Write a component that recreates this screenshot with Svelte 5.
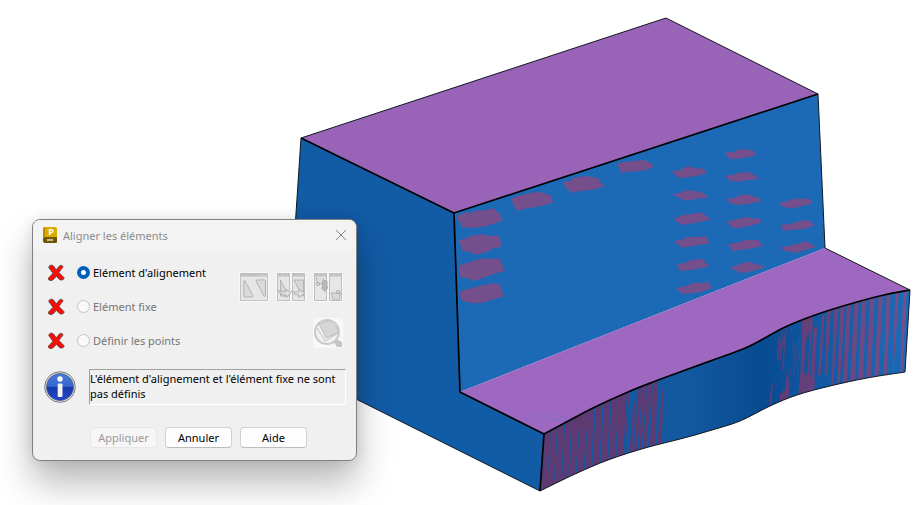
<script lang="ts">
  type Point = [number, number]

  let selected = $state('align')

  const steps = [
    { id: 'align', label: "Elément d'alignement", enabled: true },
    { id: 'fixed', label: 'Elément fixe', enabled: false },
    { id: 'points', label: 'Définir les points', enabled: false },
  ]

  const topCurve: Point[] = [
    [544, 434], [572, 419], [595, 407], [628, 392], [653, 382], [680, 372], [713, 360], [743, 349],
    [763, 339], [783, 328], [807, 318], [830, 310], [857, 302], [884, 295], [910, 290],
  ]
  const bottomCurve: Point[] = [
    [540, 491], [575, 474], [608, 460], [645, 448], [684, 438], [712, 430], [740, 421],
    [770, 406], [797, 395], [830, 386], [867, 378], [905, 372],
  ]

  // Catmull-Rom spline written as cubic segments, without the leading move
  function smooth(points: Point[]): string {
    let d = ''
    for (let i = 0; i < points.length - 1; i++) {
      const p0 = points[i - 1] ?? points[i]
      const p1 = points[i]
      const p2 = points[i + 1]
      const p3 = points[i + 2] ?? p2
      d += ` C ${p1[0] + (p2[0] - p0[0]) / 6} ${p1[1] + (p2[1] - p0[1]) / 6}`
      d += ` ${p2[0] - (p3[0] - p1[0]) / 6} ${p2[1] - (p3[1] - p1[1]) / 6} ${p2[0]} ${p2[1]}`
    }
    return d
  }

  const topEdge = `M 544 434${smooth(topCurve)}`
  const bottomEdge = `M 540 491${smooth(bottomCurve)}`
  const curvedFace = `${topEdge} L 905 372${smooth([...bottomCurve].reverse())} Z`
  const stepFace = `${topEdge} L 825 248 L 460 392 Z`

  // overlap patches on the upright face, in thirds of a scene unit
  const leftPatches = [
    '52,258 78,247 92,249 110,241 128,242 162,234 168,244 180,252 187,272 160,281 140,288 95,294 64,291 64,278 55,275',
    '55,330 74,328 88,319 125,312 142,317 176,317 187,349 156,357 142,365 107,374 90,366 68,362 62,347',
    '55,407 74,401 88,397 120,386 168,386 180,386 194,424 160,432 132,443 100,453 88,446 60,440 59,420',
    '60,485 76,479 110,470 148,461 172,460 182,470 191,499 152,511 124,519 95,520 68,512 61,502',
    '214,206 232,198 265,190 298,185 322,193 333,199 339,218 300,229 262,235 230,242 221,228',
    '368,155 392,152 400,143 440,138 474,145 480,155 494,169 455,180 420,183 398,188 380,176',
    '530,103 546,97 580,93 610,90 632,98 642,112 600,124 560,125 543,131 542,119',
  ]
  const rightPatches = [
    '215,124 240,121 255,111 275,110 288,116 308,115 321,129 285,139 250,143 235,144',
    '217,192 240,189 258,181 285,183 308,189 318,196 326,203 290,206 260,212 238,204',
    '221,266 250,255 275,252 302,247 318,257 332,269 295,277 265,282 248,284 232,276',
    '221,335 250,328 262,321 290,322 318,318 329,340 295,345 268,350 246,353 238,346',
    '229,404 260,397 275,389 312,387 315,398 329,408 290,418 262,421 240,423',
    '227,475 262,467 280,458 300,460 325,457 336,475 300,487 262,491 248,492 240,485',
    '372,68 402,66 418,58 440,59 457,60 470,75 445,81 410,87 388,86',
    '374,137 400,134 425,127 452,128 470,140 478,146 440,151 415,155 390,152',
    '379,207 402,204 420,196 445,193 458,199 477,203 484,212 450,221 415,225 392,220',
    '379,275 410,268 440,261 455,265 480,266 486,277 450,287 418,294 402,295 390,287',
    '381,343 410,338 438,330 475,329 480,339 491,347 450,356 415,361 395,363 392,353',
    '388,412 408,407 428,398 450,395 466,403 482,405 493,412 478,418 455,424 420,430 405,419',
    '538,218 560,214 575,208 605,206 628,206 639,219 610,227 580,234 550,232',
    '541,285 575,281 600,272 625,270 636,280 645,286 610,297 575,300 550,302',
    '543,352 575,346 600,339 622,334 634,343 648,350 618,359 590,368 560,364 548,358',
  ]

  // [x top, y top, width top, x bottom, y bottom, width bottom]
  const slivers = [
    [91, 250, 2, 82, 395, 2], [113, 228, 4, 103, 390, 2], [134, 215, 3, 125, 385, 3],
    [156, 200, 2, 147, 378, 4], [179, 212, 1, 169, 366, 5], [204, 200, 1, 192, 358, 6],
    [226, 165, 5, 215, 350, 5], [250, 155, 5, 239, 343, 5], [274, 145, 5, 263, 333, 4],
    [293, 195, 1, 287, 325, 5], [322, 125, 3, 311, 318, 4],
  ]
  const stripes = [
    [343, 155, 6, 334, 312, 11], [361, 110, 12, 347, 308, 9], [375, 100, 13, 360, 303, 7],
    [390, 98, 15, 374, 298, 9], [406, 90, 13, 398, 290, 18], [429, 118, 3, 418, 288, 14],
  ]
  const rightStripes = [
    [406, 170, 11, 396, 345, 12], [430, 135, 7, 418, 316, 8], [447, 118, 12, 438, 312, 5],
    [469, 112, 13, 457, 350, 4], [488, 106, 13, 475, 348, 8], [507, 102, 12, 494, 345, 13],
    [530, 94, 13, 517, 340, 14], [553, 88, 14, 541, 335, 14], [577, 80, 14, 565, 330, 14],
    [602, 75, 13, 589, 328, 12], [626, 70, 12, 615, 325, 9], [651, 65, 11, 640, 300, 2],
    [675, 58, 10, 664, 312, 6],
  ]

  function strip([xt, yt, wt, xb, yb, wb]: number[]): string {
    return `${xt - wt / 2},${yt} ${xt + wt / 2},${yt} ${xb + wb / 2},${yb} ${xb - wb / 2},${yb}`
  }
</script>

{#snippet cross()}
  <svg class="cross" viewBox="0 0 18 18" aria-hidden="true">
    <path
      d="M2.2 2.2 C3.8 .6 6 .8 7.2 2.9 L9.2 6 L12.2 2.2 C13.4 1 15.6 1.2 15.9 2.6 C16 3.6 14.8 4.6 13.9 5.6 L11.9 8.5 L16.9 13.6 C17.6 15 15.6 16.4 13.2 15.9 L9.3 12.2 L6.8 15 C5.6 16.6 3.3 17 1.7 15.7 C.8 14.4 2.1 13.3 3.3 12.3 L6 9.3 L3.4 5.6 C2.8 4.6 1.1 3.8 2.2 2.2 Z"
      fill="#ff0a06"
      stroke="#5a3a38"
      stroke-width=".9"
    />
  </svg>
{/snippet}

<main class="workspace">
  <svg class="scene" viewBox="0 0 922 505" role="img" aria-label="Vue 3D du solide">
    <defs>
      <linearGradient id="shade" gradientUnits="userSpaceOnUse" x1="540" y1="0" x2="909" y2="0">
        <stop offset="0" stop-color="#145ba4" />
        <stop offset=".4" stop-color="#13599f" />
        <stop offset=".6" stop-color="#074b91" />
        <stop offset=".72" stop-color="#0f569f" />
        <stop offset="1" stop-color="#1c6bb7" />
      </linearGradient>
      <linearGradient id="violet" gradientUnits="userSpaceOnUse" x1="290" y1="0" x2="690" y2="0">
        <stop offset="0" stop-color="#5f3b75" />
        <stop offset="1" stop-color="#77508c" />
      </linearGradient>
      <clipPath id="curved"><path d={curvedFace} /></clipPath>
    </defs>

    <polygon points="301,138 454,213 460,392 544,434 540,491 286,364" fill="#125ba5" />
    <polygon points="454,213 818,94 825,248 460,392" fill="#1c69b5" />
    <polygon points="301,138 666,18 818,94 454,213" fill="#9963b8" />
    <path d={stepFace} fill="#9f68c0" />
    <path d={curvedFace} fill="url(#shade)" />

    <g transform="translate(440 130) scale(.3333)" fill="#754f8c">
      {#each leftPatches as points}
        <polygon {points} />
      {/each}
    </g>
    <g transform="translate(600 130) scale(.3333)" fill="#754f8c">
      {#each rightPatches as points}
        <polygon {points} />
      {/each}
    </g>

    <g clip-path="url(#curved)">
      <g transform="translate(520 350) scale(.3333)" fill="#5d3a72">
        <polygon points="60,260 72,240 329,115 315,325 60,430" />
        {#each slivers as s}
          <polygon points={strip(s)} fill="#135aa2" />
        {/each}
        {#each stripes as s}
          <polygon points={strip(s)} />
        {/each}
      </g>
      <g transform="translate(680 270) scale(.3333)" fill="url(#violet)">
        <path d="M298 200 L293 275 M307 185 L300 270 M318 172 L308 300 M314 195 L304 240" fill="none" stroke="#53407d" stroke-width="5" />
        <polygon points="267,410 272,360 282,324 277,364 273,408" />
        <polygon points="298,400 301,365 305,378 311,350 314,365 321,294 325,330 329,345 325,390" />
        <path d="M338 205 L341 260 M346 220 L341 320 M354 207 L350 245 L353 320 M359 207 L357 270 M333 290 L328 345 M335 175 V190" fill="none" stroke="#4b4b8b" stroke-width="2" />
        <polygon points="354,385 362,300 366,145 399,130 397,185 391,225 388,310 397,325 405,330 402,370" />
        <polygon points="384,185 389,200 383,300 376,322 372,300 378,220" fill="#0f569f" />
        {#each rightStripes as s}
          <polygon points={strip(s)} />
        {/each}
      </g>
    </g>

    <path d="M525 418 l20 3 M530 414 l34 8 M545 413 l22 4 M551 419 l18 1 M522 419 l12 5" stroke="#7772c4" stroke-width=".7" />

    <g class="thin">
      <path d="M301 138 L286 364 L540 491 M301 138 L666 18 L818 94 L825 248 L910 290 L905 372" />
      <path d={bottomEdge} />
    </g>
    <g class="edge">
      <path d="M301 138 L454 213 L818 94 M454 213 L460 392 L544 434 L540 491" />
      <path d={topEdge} />
    </g>
  </svg>

  <section class="dialog" role="dialog" aria-labelledby="dialog-title">
    <header>
      <svg class="logo" viewBox="0 0 16 18" aria-hidden="true">
        <path d="M3 1 H13 Q15 1 15 3 V13 H1 V3 Q1 1 3 1 Z" fill="#dbac00" />
        <path d="M3 1 Q1 1 1 3 V12 L3 11 Z" fill="#c08b00" />
        <path d="M1 12 L3 11 H15 V16 Q15 17 14 17 H3 Q1 17 1 15 Z" fill="#705600" />
        <path d="M5 14 H11" stroke="#d9d1b2" stroke-width="1.6" />
        <text x="9" y="9" text-anchor="middle">P</text>
      </svg>
      <h1 id="dialog-title">Aligner les éléments</h1>
      <button class="close" aria-label="Fermer">
        <svg viewBox="0 0 12 12"><path d="M1 1 L11 11 M11 1 L1 11" /></svg>
      </button>
    </header>

    <div class="content">
      <div class="choices">
        <div class="steps">
          {#each steps as step}
            <div class="step">
              {@render cross()}
              <input
                type="radio"
                id={step.id}
                name="step"
                value={step.id}
                bind:group={selected}
                disabled={!step.enabled}
              />
              <label for={step.id} class:off={!step.enabled}>{step.label}</label>
            </div>
          {/each}
        </div>

        <div class="tools">
          <button disabled aria-label="Afficher les éléments">
            <svg viewBox="0 0 30 30">
              <path d="M1.5 1.5 H28.5 V28.5 H1.5 Z" fill="#e6e6e6" stroke="#c2c2c2" />
              <path d="M1 1 H29 V4.5 H1 Z" fill="#c0c0c0" />
              <path d="M20 2.8 H22 M23 2.8 H25 M26 2.8 H28" stroke="#d4d4d4" />
              <path d="M4.8 9 Q5 8 6 9 L14 24 Q14 25 13 25 H6 Q4.8 25 4.8 24 Z M18 8 H25 Q26.5 8 26.5 9 V24 Q26 25 25 24 L17 9 Q17 8 18 8 Z" fill="#dadada" stroke="#b3b3b3" />
            </svg>
          </button>
          <button disabled aria-label="Aligner deux vues">
            <svg viewBox="0 0 30 30">
              <path d="M1.5 1.5 H13.5 V28.5 H1.5 Z M16.5 1.5 H28.5 V28.5 H16.5 Z" fill="#e5e5e5" stroke="#bebebe" />
              <path d="M1 1 H14 V4.5 H1 Z M16 1 H29 V4.5 H16 Z" fill="#c0c0c0" />
              <path d="M6 2.8 H8 M10 2.8 H12 M21 2.8 H23 M25 2.8 H27" stroke="#d4d4d4" />
              <path d="M4.5 8 L12.5 24 H4.5 Z M18 8 H27.5 V24 H26 Z" fill="#d8d8d8" stroke="#b3b3b3" />
              <path d="M1 18 Q5 21 10 19.5 V17 L15 21 L10 25.5 V23 Q6 24 1 18 Z M15 19 Q20 21 23 19.5 V17 L29 21 L23 25.5 V23 Q19 24 15 19 Z" fill="#dfdfdf" stroke="#b0b0b0" />
            </svg>
          </button>
          <button disabled aria-label="Placer les points">
            <svg viewBox="0 0 30 30">
              <path d="M1.5 1.5 H13.5 V28.5 H1.5 Z M16.5 1.5 H28.5 V28.5 H16.5 Z" fill="#e6e6e6" stroke="#bebebe" />
              <path d="M1 1 H14 V4.5 H1 Z M16 1 H29 V4.5 H16 Z" fill="#c0c0c0" />
              <path d="M5 2.8 H7 M9 2.8 H12 M20 2.8 H22 M24 2.8 H27" stroke="#d4d4d4" />
              <path d="M3 5 L4.5 12 H9 L11 6" fill="#dcdcdc" stroke="#b8b8b8" />
              <path d="M10 9 Q12 8 14 9 V15.5 H15 L12 19.5 L8.5 16 H9.5 Z" fill="#b9b9b9" stroke="#a9a9a9" />
              <circle cx="5" cy="12" r="1.5" fill="#f3f3f3" stroke="#9f9f9f" />
              <path d="M18 21 H27.5 L26 28 H20.5 Z" fill="#d8d8d8" stroke="#b3b3b3" />
              <circle cx="25" cy="20" r="1.5" fill="#f3f3f3" stroke="#9f9f9f" />
            </svg>
          </button>
          <button class="preview" disabled aria-label="Aperçu">
            <svg viewBox="0 0 30 30">
              <path d="M21 21 L25 22 L29 24 V29 H24 L20 23 Z" fill="#c4c4c4" />
              <circle cx="14" cy="14" r="12" fill="#f1f1f1" stroke="#c9c9c9" stroke-width="2" />
              <path d="M6 6 L16 2.5 L25 11 L24 15 L13 20 Z" fill="#d6d6d6" stroke="#c0c0c0" />
              <path d="M4 10 L12 23 L25 15" fill="none" stroke="#c0c0c0" />
            </svg>
          </button>
        </div>
      </div>

      <div class="status">
        <svg viewBox="0 0 32 32" aria-hidden="true">
          <defs>
            <linearGradient id="ball" x1="0" y1="0" x2="0" y2="1">
              <stop offset="0" stop-color="#4a7ad8" />
              <stop offset=".48" stop-color="#3565cb" />
              <stop offset=".5" stop-color="#1539aa" />
              <stop offset="1" stop-color="#2147c8" />
            </linearGradient>
          </defs>
          <circle cx="16" cy="16" r="15.3" fill="#eee" stroke="#777" />
          <circle cx="16" cy="16" r="13.6" fill="url(#ball)" stroke="#555e7e" stroke-width=".8" />
          <circle cx="16" cy="8" r="2.7" fill="#fff" />
          <rect x="13.7" y="12.5" width="4.8" height="13.5" rx="1" fill="#f2f2f2" />
        </svg>
        <output>L'élément d'alignement et l'élément fixe ne sont pas définis</output>
      </div>

      <footer>
        <button disabled>Appliquer</button>
        <button>Annuler</button>
        <button>Aide</button>
      </footer>
    </div>
  </section>
</main>

<style>
  :global(body) {
    margin: 0;
    background: #fff;
  }

  .workspace {
    position: relative;
    min-height: 100vh;
    overflow: hidden;
    font-family: 'Noto Sans', 'Open Sans', sans-serif;
    font-size: 11px;
    line-height: 15px;
    color: #000;
  }

  .scene {
    display: block;
    width: 100%;
  }

  .thin {
    fill: none;
    stroke: #101820;
    stroke-width: 1;
  }

  .edge {
    fill: none;
    stroke: #000;
    stroke-width: 1.7;
    stroke-linejoin: round;
  }

  .dialog {
    position: absolute;
    left: 32px;
    top: 219px;
    box-sizing: border-box;
    width: 325px;
    border: 1px solid #808080;
    border-radius: 8px;
    background: #f0f0f0;
    box-shadow: 0 22px 36px rgba(0, 0, 0, 0.28), 0 0 14px rgba(0, 0, 0, 0.1);
  }

  header {
    display: flex;
    align-items: center;
    gap: 5px;
    height: 30px;
    padding: 0 9px;
    border-radius: 7px 7px 0 0;
    background: #f3f3f3;
    color: #8c8c8c;
  }

  .logo {
    width: 16px;
    height: 18px;
  }

  .logo text {
    font-size: 9px;
    font-weight: 700;
    fill: #fff;
  }

  h1 {
    flex: 1;
    margin: 0;
    font-size: 11px;
    font-weight: 400;
  }

  button {
    margin: 0;
    padding: 0;
    font: inherit;
    color: inherit;
  }

  .close {
    width: 12px;
    height: 12px;
    border: 0;
    background: none;
  }

  .close svg {
    display: block;
    fill: none;
    stroke: #858585;
  }

  .content {
    padding: 6px 10px 12px 11px;
  }

  .choices {
    display: flex;
    justify-content: space-between;
  }

  .steps {
    display: grid;
    gap: 1px;
  }

  .step {
    display: flex;
    align-items: center;
    height: 33px;
  }

  .cross {
    width: 18px;
    height: 18px;
    margin: 0 12px 0 3px;
  }

  input {
    appearance: none;
    box-sizing: border-box;
    width: 13px;
    height: 13px;
    margin: 0 3px 0 0;
    border: 1px solid #8a8a8a;
    border-radius: 50%;
    background: #f9f9f9;
  }

  input:checked {
    border: 4px solid #005fb8;
    background: #fff;
  }

  input:disabled {
    border-color: #c3c3c3;
  }

  .off {
    color: #757575;
  }

  .tools {
    display: grid;
    grid-template-columns: repeat(3, 30px);
    gap: 16px 7px;
    align-content: start;
    padding: 16px 3px 0 0;
  }

  .tools button {
    width: 30px;
    height: 30px;
    border: 0;
    border-radius: 3px;
    background: #f8f8f8;
  }

  .tools svg {
    display: block;
  }

  .preview {
    grid-column: 3;
  }

  .status {
    display: flex;
    align-items: center;
    gap: 13px;
    margin-top: 12px;
  }

  .status svg {
    flex: none;
    width: 32px;
    height: 32px;
  }

  output {
    flex: 1;
    box-sizing: border-box;
    min-height: 36px;
    padding: 1px 0;
    border: 1px solid;
    border-color: #a0a0a0 #fff #fff #a0a0a0;
  }

  footer {
    display: flex;
    gap: 8px;
    margin-top: 22px;
    padding-left: 46px;
  }

  footer button {
    box-sizing: border-box;
    width: 67px;
    height: 21px;
    border: 1px solid #d0d0d0;
    border-bottom-color: #bcbcbc;
    border-radius: 4px;
    background: #fdfdfd;
  }

  footer button:disabled {
    border-color: #e7e7e7;
    background: #f6f6f6;
    color: #9a9a9a;
  }
</style>
